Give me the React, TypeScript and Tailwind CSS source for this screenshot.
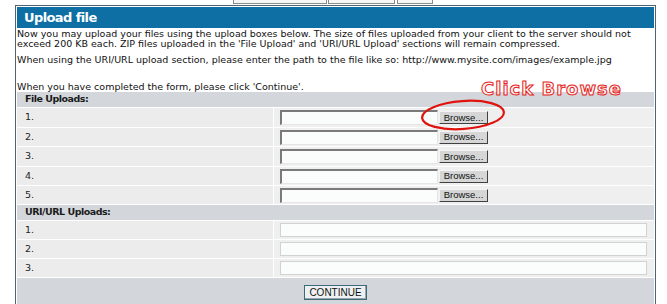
import React from 'react';

const font = { fontFamily: '"DejaVu Sans", Verdana, sans-serif' };
const sysFont = { fontFamily: '"Liberation Sans", Arial, sans-serif' };

const FileRow: React.FC<{ n: number; h: string }> = ({ n, h }) => (
  <div className={`grid grid-cols-[256px_1fr] gap-px ${h}`}>
    <div className="bg-[#ececec] pl-[8px] flex items-center text-[9.5px] text-[#222]">{n}.</div>
    <div className="bg-[#efefef] pl-[6px] flex items-center">
      <div className="w-[158px] h-[15px] bg-[#fbfcfc] border-t-2 border-l-2 border-b border-r border-t-[#7a7a7a] border-l-[#7a7a7a] border-b-[#e6e6e6] border-r-[#e6e6e6]" />
      <button
        className="ml-px w-[49px] h-[13px] bg-[#d6d6d6] border border-t-[#f4f4f4] border-l-[#f4f4f4] border-b-[#404040] border-r-[#404040] text-[9.5px] leading-none text-[#111]"
        style={sysFont}
      >
        Browse...
      </button>
    </div>
  </div>
);

const UrlRow: React.FC<{ n: number }> = ({ n }) => (
  <div className="grid grid-cols-[256px_1fr] gap-px h-[18px]">
    <div className="bg-[#ececec] pl-[8px] flex items-center text-[9.5px] text-[#222]">{n}.</div>
    <div className="bg-[#efefef] pl-[6px] pr-[7px] flex items-center">
      <div className="w-full h-[14px] bg-[#fbfcfc] border border-[#cfd3d6]" />
    </div>
  </div>
);

const SectionHead: React.FC<{ title: string }> = ({ title }) => (
  <div className="bg-[#d3d7db] h-[15px] pl-[8px] flex items-center text-[9.5px] tracking-[-0.5px] font-bold text-[#1a1a1a]">
    {title}
  </div>
);

const rowHeights = ['h-[19px]', 'h-[18px]', 'h-[19px]', 'h-[18px]', 'h-[18px]'];

export default function App() {
  return (
    <div className="relative w-[667px] h-[304px] bg-white overflow-hidden" style={font}>
      <div className="flex h-[5px] ml-[233px] gap-px">
        <div className="w-[94px] h-[4px] border border-t-0 border-[#8a8a8a] bg-[#f6f6f6]" />
        <div className="w-[67px] h-[4px] border border-t-0 border-[#8a8a8a] bg-[#f6f6f6]" />
        <div className="ml-px w-[36px] h-[4px] border border-t-0 border-[#8a8a8a] bg-[#f6f6f6]" />
      </div>

      <div className="ml-[15px] w-[641px] border border-b-0 border-[#4e6472] bg-white p-px pb-0">
        <div className="bg-[#0d6fa4] h-[21px] pl-[7px] flex items-center text-white font-bold text-[13px] tracking-[-0.6px]">
          Upload file
        </div>
        <div className="text-[9.5px] leading-[10px] text-[#111] pt-px whitespace-nowrap">
          <p>
            Now you may upload your files using the upload boxes below. The size of files uploaded from your client to the server should not
            <br />
            exceed 200 KB each. ZIP files uploaded in the 'File Upload' and 'URI/URL Upload' sections will remain compressed.
          </p>
          <p className="mt-[6px]">When using the URI/URL upload section, please enter the path to the file like so: http://www.mysite.com/images/example.jpg</p>
          <p className="mt-[17px]">When you have completed the form, please click 'Continue'.</p>
        </div>

        <div className="flex flex-col gap-px bg-white">
          <SectionHead title="File Uploads:" />
          {[1, 2, 3, 4, 5].map((n, i) => (
            <FileRow key={n} n={n} h={rowHeights[i]} />
          ))}
          <SectionHead title="URI/URL Uploads:" />
          {[1, 2, 3].map((n) => (
            <UrlRow key={n} n={n} />
          ))}
          <div className="bg-[#d3d7db] h-[40px] flex justify-center pt-[7px]">
            <button
              className="h-[15px] w-[63px] bg-[#eef1f3] border border-[#3e6a78] text-[10px] leading-none text-[#111] shadow-[inset_-1px_-1px_0_#9aa5ab]"
              style={sysFont}
            >
              CONTINUE
            </button>
          </div>
        </div>
      </div>

      <div
        className="absolute left-[481px] top-[75px] text-[18px] font-bold text-[#fff4f4] tracking-[1px] [-webkit-text-stroke:1px_#e3231b]"
        style={font}
      >
        Click Browse
      </div>
      <svg className="absolute left-[416px] top-[96px]" width="94" height="40" viewBox="0 0 94 40">
        <ellipse cx="47" cy="19" rx="41" ry="14" fill="none" stroke="#e0140f" strokeWidth="2.2" transform="rotate(-4 47 19)" />
      </svg>
    </div>
  );
}
